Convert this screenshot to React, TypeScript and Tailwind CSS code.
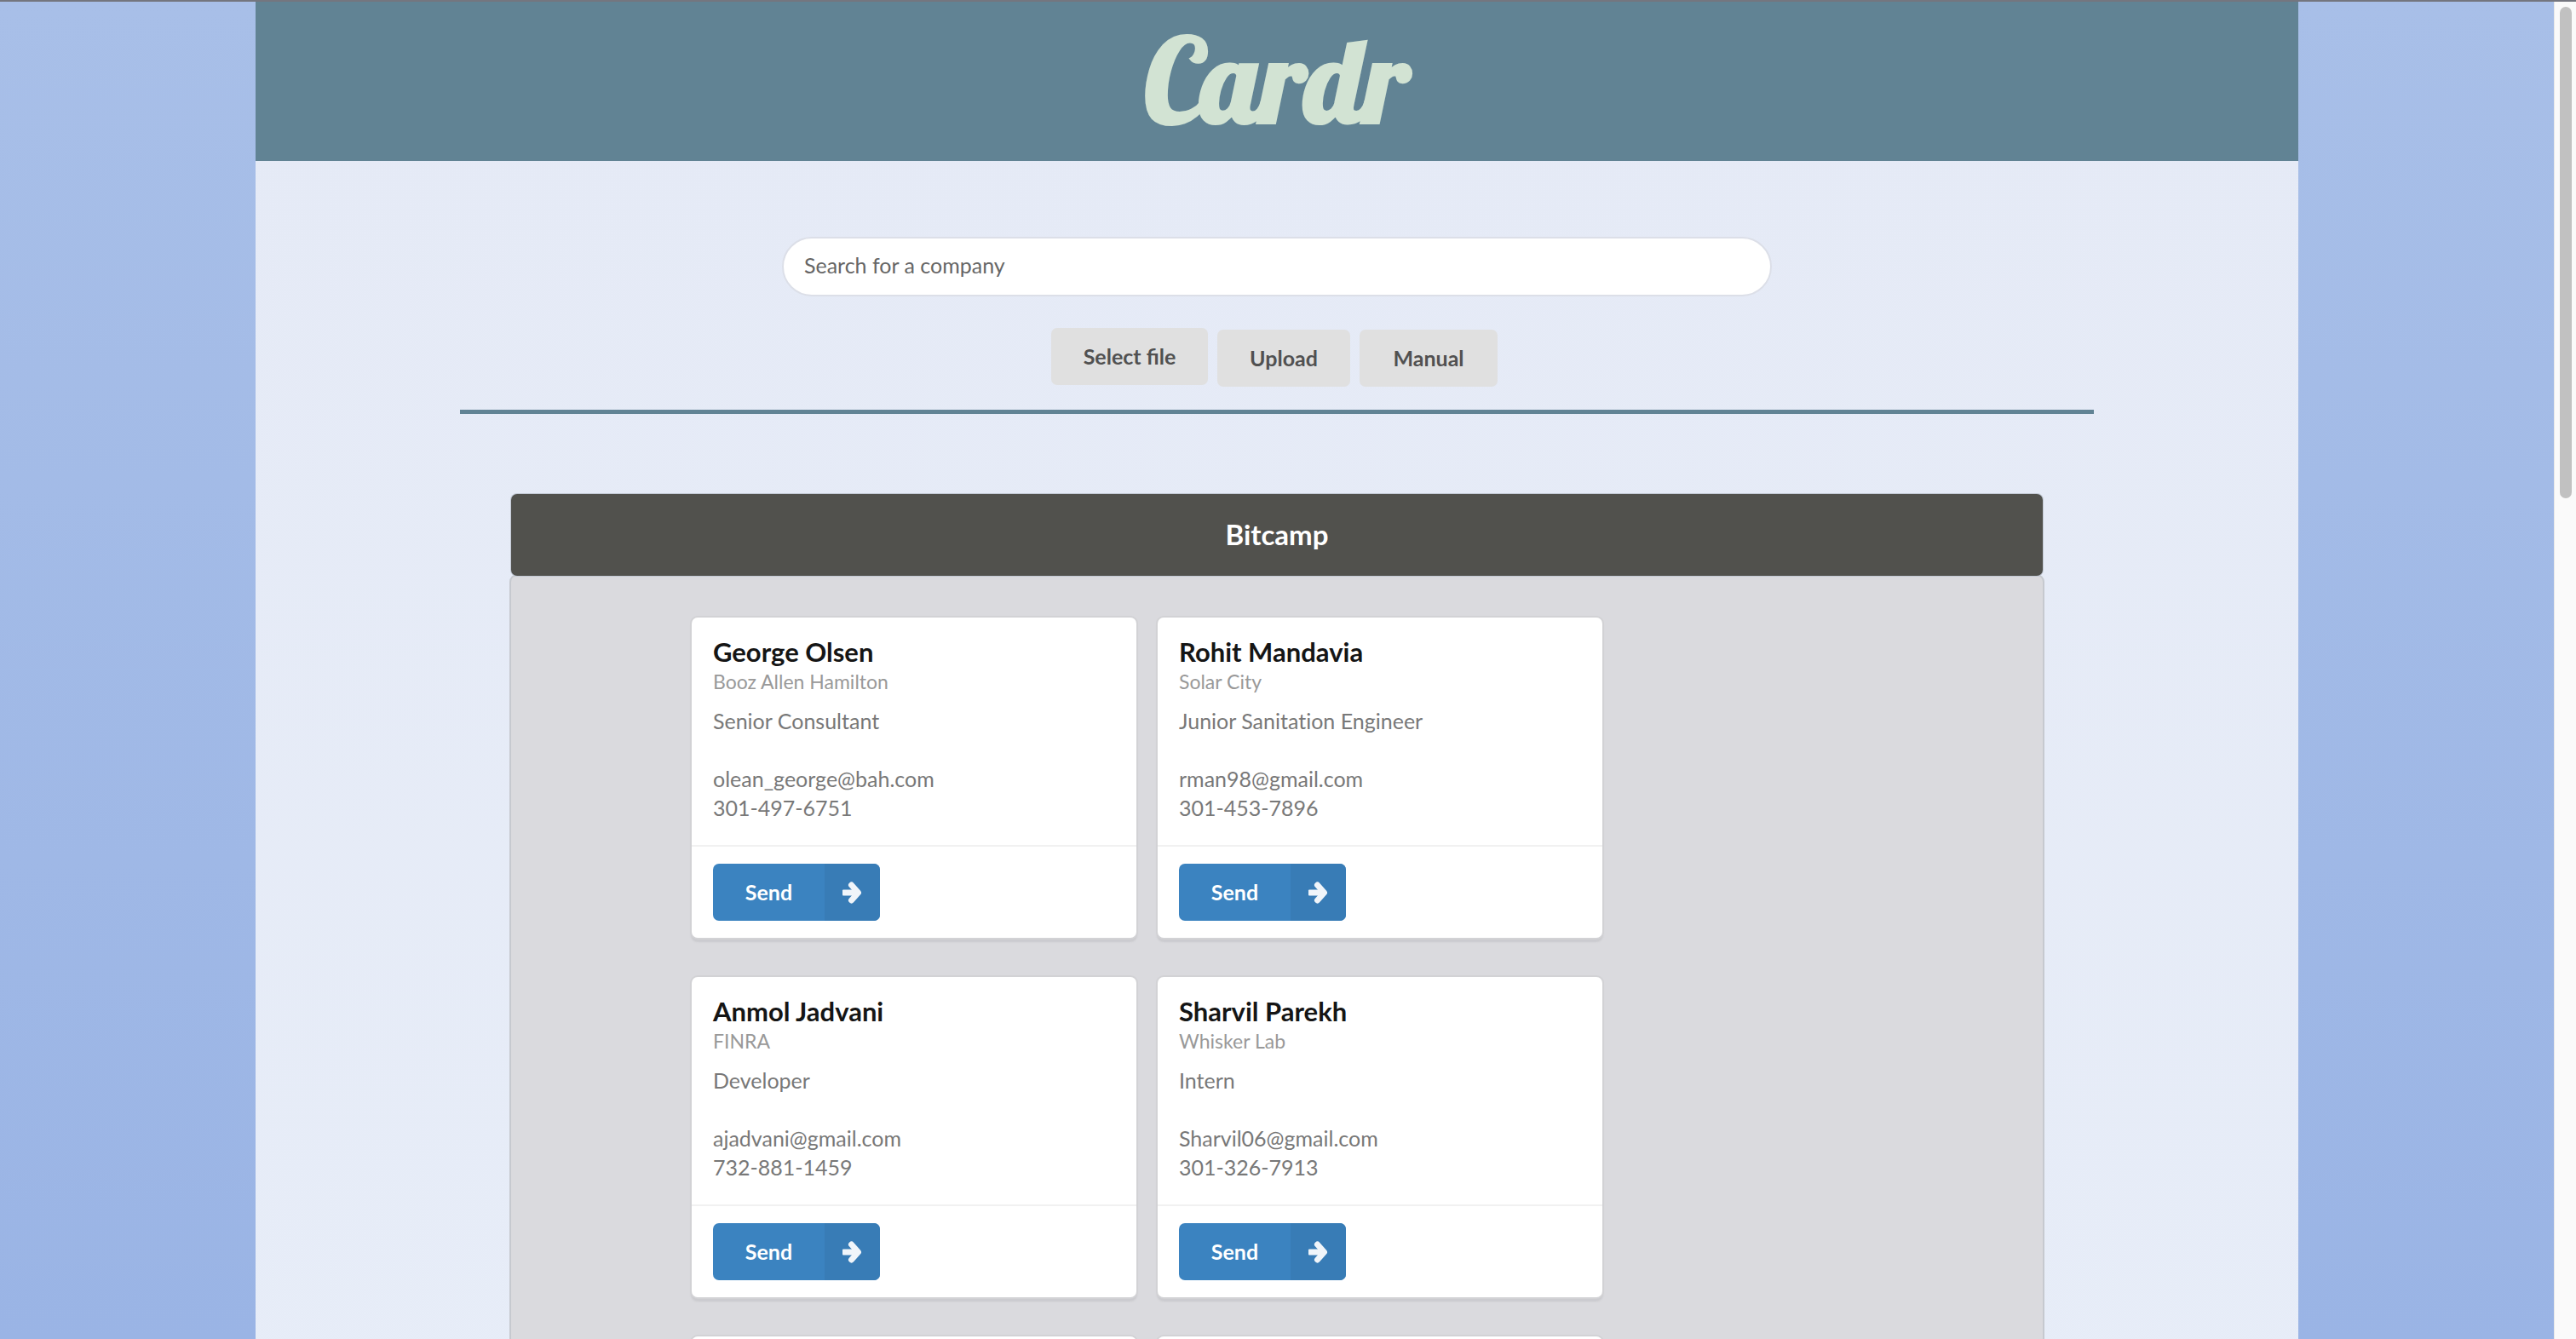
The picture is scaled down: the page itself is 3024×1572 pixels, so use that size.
import React from "react";

type Contact = {
  name: string;
  company: string;
  role: string;
  email: string;
  phone: string;
};

const contacts: Contact[] = [
  {
    name: "George Olsen",
    company: "Booz Allen Hamilton",
    role: "Senior Consultant",
    email: "olean_george@bah.com",
    phone: "301-497-6751",
  },
  {
    name: "Rohit Mandavia",
    company: "Solar City",
    role: "Junior Sanitation Engineer",
    email: "rman98@gmail.com",
    phone: "301-453-7896",
  },
  {
    name: "Anmol Jadvani",
    company: "FINRA",
    role: "Developer",
    email: "ajadvani@gmail.com",
    phone: "732-881-1459",
  },
  {
    name: "Sharvil Parekh",
    company: "Whisker Lab",
    role: "Intern",
    email: "Sharvil06@gmail.com",
    phone: "301-326-7913",
  },
];

const cardFrame =
  "w-[522px] rounded-[7px] bg-white shadow-[0_0_0_2px_#d2d2d5,0_4px_2px_1px_#cbcbcf]";

function ArrowRight() {
  return (
    <svg viewBox="0 0 24 26" className="h-[26px] w-6" fill="none" aria-hidden="true">
      <rect x="1" y="9.5" width="15" height="7" rx="1" fill="#f0f5fa" />
      <path
        d="M11.5 4L19.5 13L11.5 22"
        stroke="#f0f5fa"
        strokeWidth="7"
        strokeLinejoin="round"
        strokeLinecap="round"
      />
    </svg>
  );
}

function ContactCard({ contact }: { contact: Contact }) {
  return (
    <article className={cardFrame}>
      <div className="h-[267px] px-[25px] pt-[22px] text-[25px] leading-[34px] text-[#787878] [font-variant-ligatures:none]">
        <h3 className="text-[31px] font-bold leading-[36px] text-[#151515]">{contact.name}</h3>
        <p className="text-[23px] leading-[34px] text-[#999999]">{contact.company}</p>
        <p className="mt-3">{contact.role}</p>
        <p className="mt-[34px]">{contact.email}</p>
        <p>{contact.phone}</p>
      </div>
      <div className="border-t-2 border-[#f1f1f1] px-[25px] py-5">
        <button
          type="button"
          className="flex h-[67px] w-[196px] overflow-hidden rounded-[7px] bg-[#3b83c0] text-[25px] font-bold text-white"
        >
          <span className="flex h-full flex-1 items-center justify-center">Send</span>
          <span className="flex h-full w-[65px] items-center justify-center bg-[#387cb6]">
            <ArrowRight />
          </span>
        </button>
      </div>
    </article>
  );
}

const actionButton =
  "h-[67px] rounded-[7px] bg-[#e0e0e0] text-[25px] font-bold text-[#515151]";

export default function App() {
  return (
    <div className="flex h-screen overflow-hidden border-t-2 border-[#74767f] bg-linear-to-b from-[#a8bfe8] to-[#9ab4e5] font-[Lato,sans-serif]">
      <div className="min-w-0 flex-1">
        <div className="mx-auto min-h-full w-4/5 bg-linear-to-b from-[#e5eaf6] to-[#e7edf8]">
          <header className="flex h-[187px] items-center justify-center bg-[#618394] pb-1">
            <h1 className="font-[Lobster,cursive] text-[135px] font-bold leading-none text-[#d2e3d3]">
              Cardr
            </h1>
          </header>

          <main>
            <form className="flex flex-col items-center pt-[89px]" onSubmit={(e) => e.preventDefault()}>
              <input
                type="text"
                aria-label="Search for a company"
                placeholder="Search for a company"
                className="h-[70px] w-[1162px] max-w-full rounded-full border-2 border-[#dcdfe8] bg-white px-6 pb-1 text-[25px] text-[#555555] placeholder:text-[#666666]"
              />
              <div className="mt-[37px] -ml-[6px] flex items-end gap-[11px]">
                <button type="button" className={`${actionButton} mb-[2px] w-[184px]`}>
                  Select file
                </button>
                <button type="submit" className={`${actionButton} w-[156px]`}>
                  Upload
                </button>
                <button type="button" className={`${actionButton} w-[162px]`}>
                  Manual
                </button>
              </div>
            </form>

            <hr className="mx-auto mt-[27px] w-4/5 border-0 border-t-[5px] border-[#618394]" />

            <section className="mx-auto mt-[94px] w-3/4">
              <h2 className="relative flex h-24 items-center justify-center rounded-[7px] bg-[#51514d] text-[33px] font-bold text-white shadow-[0_0_0_1px_#c2c9d4]">
                Bitcamp
              </h2>
              <div className="rounded-[7px] bg-[#dadade] pt-[49px] shadow-[0_0_0_2px_#c6c9cf]">
                <div className="mx-auto flex max-w-[1374px] flex-wrap gap-x-[25px] gap-y-[46px]">
                  {contacts.map((contact) => (
                    <ContactCard key={contact.email} contact={contact} />
                  ))}
                  <div className={`${cardFrame} h-[376px]`} />
                  <div className={`${cardFrame} h-[376px]`} />
                </div>
              </div>
            </section>
          </main>
        </div>
      </div>

      <div className="flex w-[26px] justify-center border-l border-[#e8e8e8] bg-[#fafafa] pt-[6px]">
        <div className="h-[577px] w-[14px] rounded-full bg-[#c1c1c1]" />
      </div>
    </div>
  );
}
